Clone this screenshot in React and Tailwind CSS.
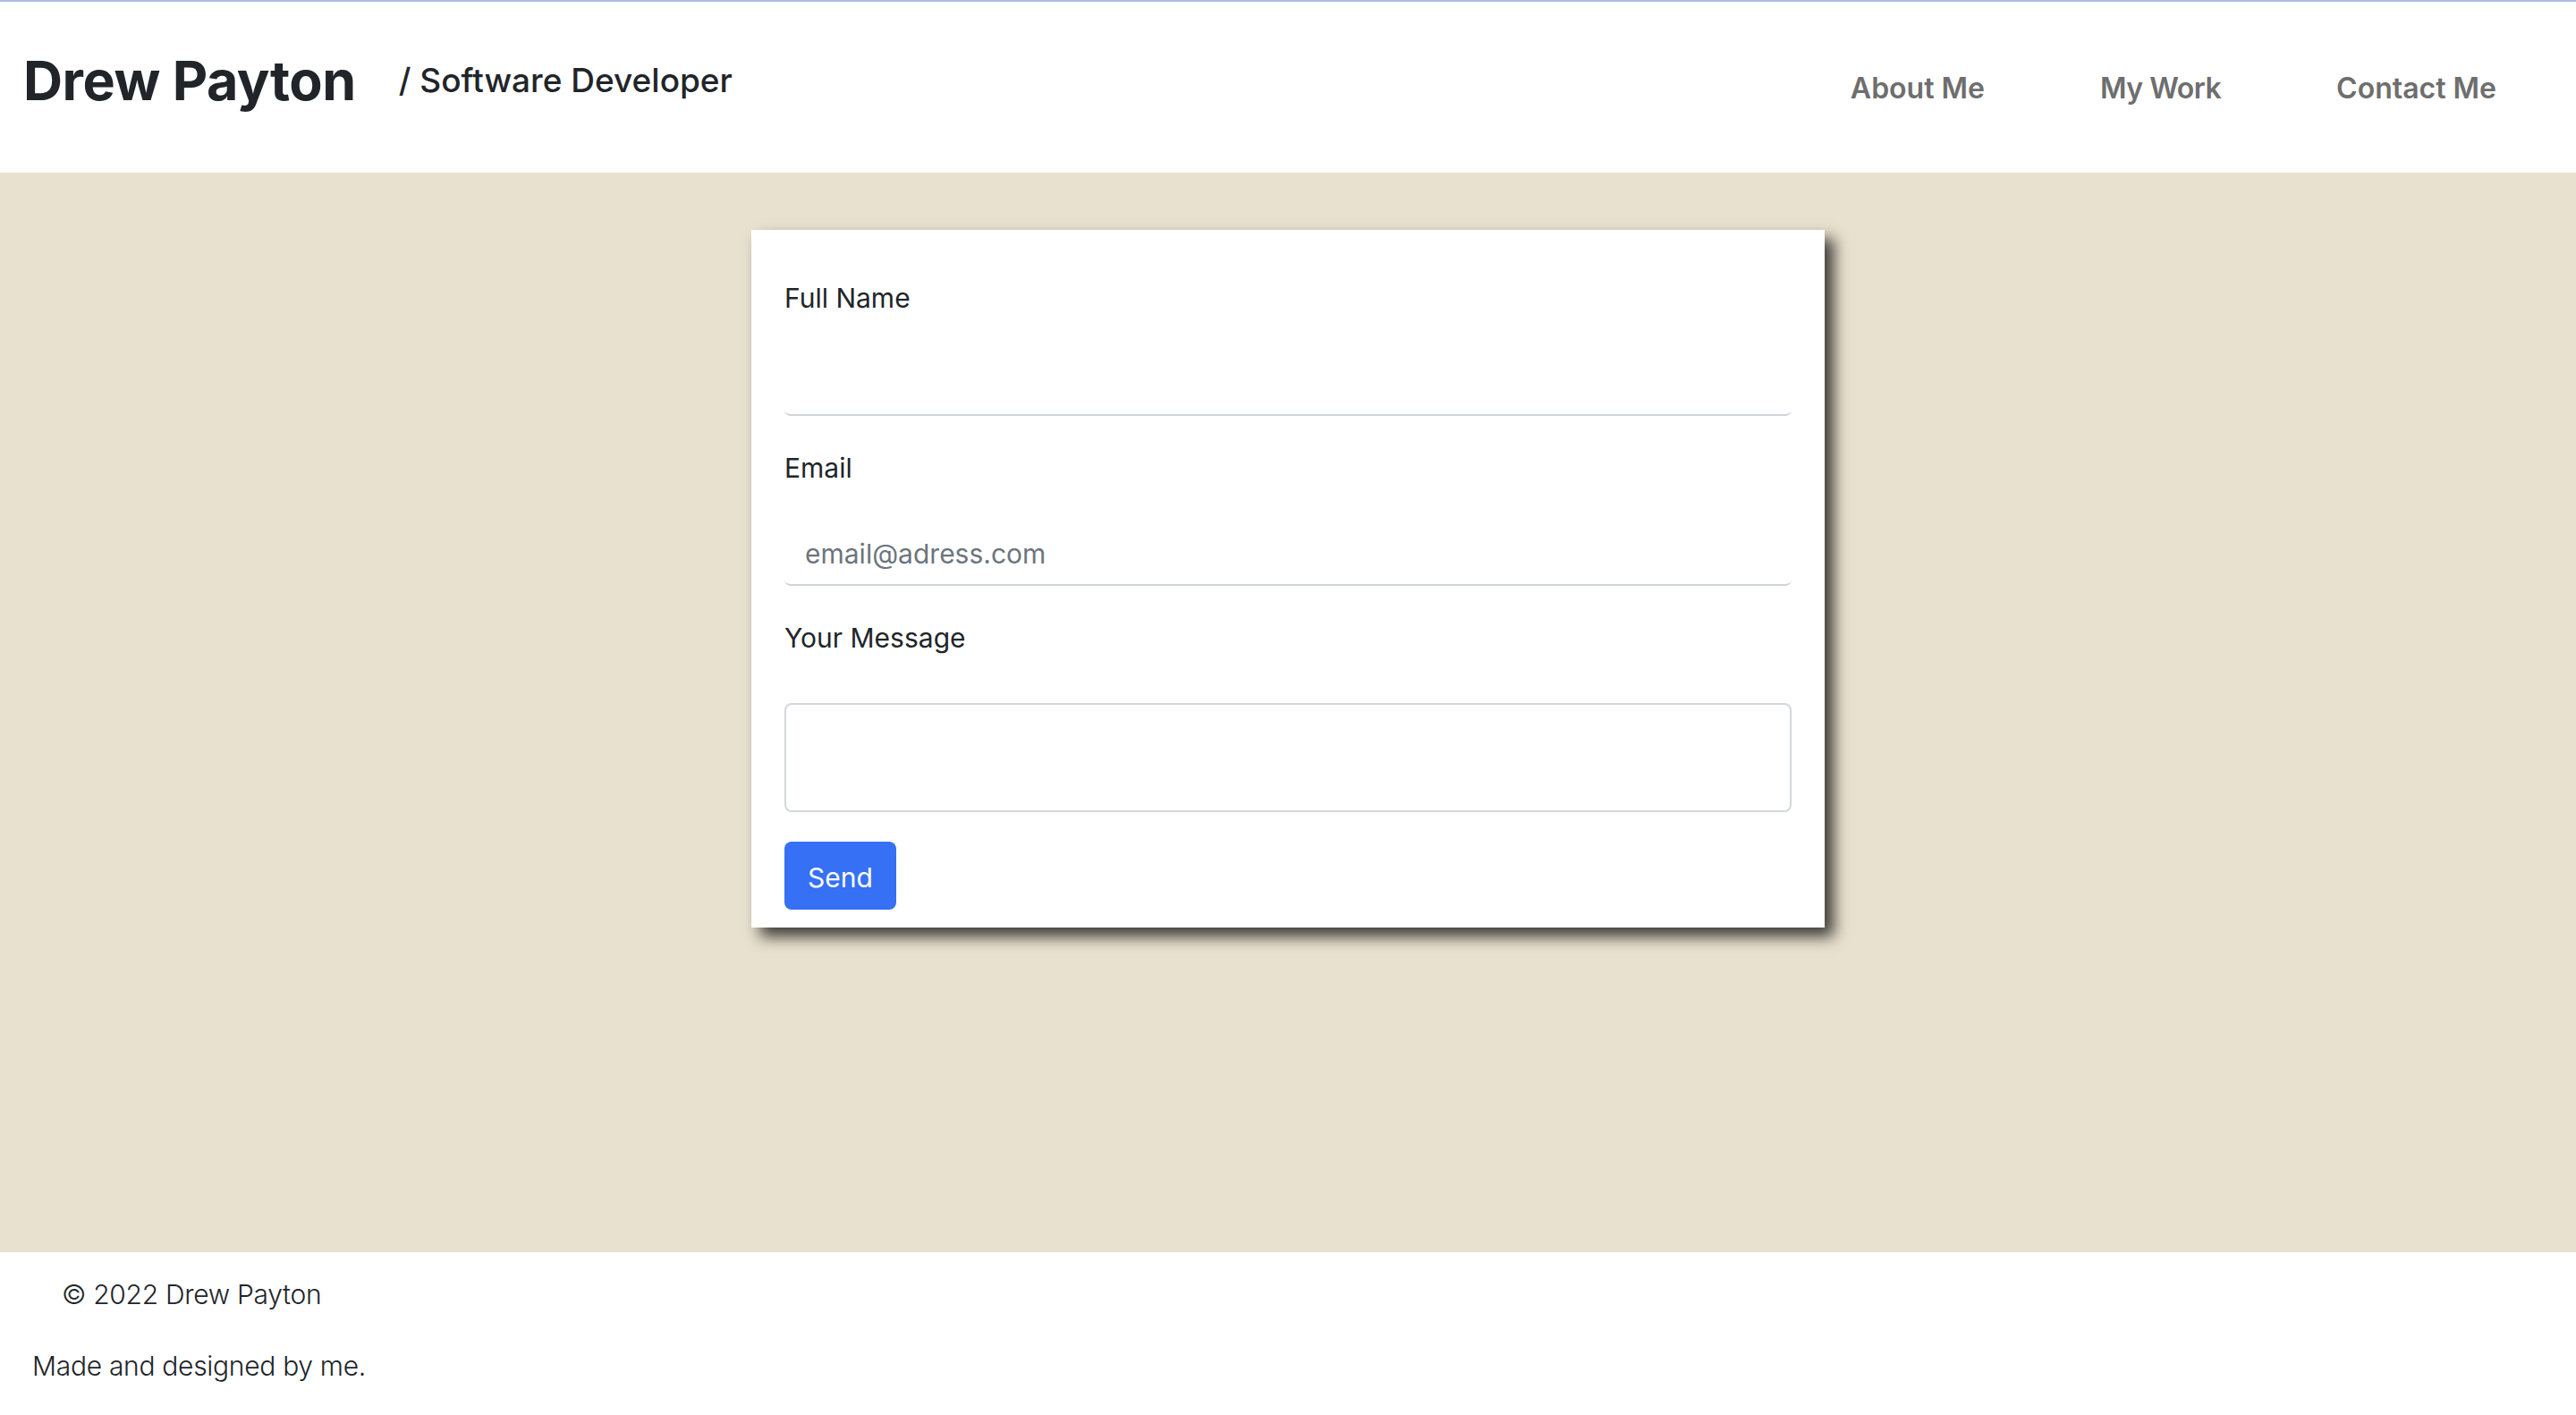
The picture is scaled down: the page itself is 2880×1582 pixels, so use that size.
import React from "react";

const Field = ({ label, children, gap = "mt-[38px]" }) => (
  <div>
    <label className="block text-[30px] leading-[45px] text-[#212529]">{label}</label>
    <div className={gap}>{children}</div>
  </div>
);

export default function App() {
  return (
    <div className="flex min-h-screen flex-col bg-white font-['Inter',sans-serif]">
      {/* Header */}
      <header className="flex h-[193px] shrink-0 items-start justify-between border-t-2 border-[#adbbe6] bg-white pl-[26px] pr-[89px] pt-[58px]">
        <div className="flex items-start">
          <h1 className="text-[61px] font-bold leading-none tracking-[-0.5px] text-[#212529]">Drew Payton</h1>
          <span className="ml-[48px] mt-[11px] text-[37px] font-medium leading-none text-[#212529]">
            / Software Developer
          </span>
        </div>
        <nav className="mt-[23px] flex gap-[129px] text-[32px] font-semibold leading-none text-[#6e6e6e]">
          <a href="#">About Me</a>
          <a href="#" className="tracking-[-0.5px]">My Work</a>
          <a href="#">Contact Me</a>
        </nav>
      </header>

      {/* Contact form */}
      <main className="flex-1 bg-[#e9e1cf] pt-[64px]">
        <form className="mx-auto flex w-[1200px] flex-col gap-[36px] bg-white px-[37px] pb-[20px] pt-[54px] shadow-[10px_10px_16px_rgba(0,0,0,0.75)]">
          <Field label="Full Name">
            <input
              type="text"
              className="block h-[71px] w-full rounded-[7px] border-b-2 border-[#ced4da] px-[23px] text-[30px] outline-none"
            />
          </Field>
          <Field label="Email">
            <input
              type="email"
              placeholder="email@adress.com"
              className="block h-[71px] w-full rounded-[7px] border-b-2 border-[#ced4da] px-[23px] text-[30px] leading-[45px] text-[#212529] outline-none placeholder:text-[#6c757d]"
            />
          </Field>
          <div>
            <Field label="Your Message" gap="mt-[50px]">
              <textarea className="block h-[122px] w-full resize-none rounded-[8px] border-2 border-[#d3d7dc] px-[23px] py-[12px] text-[30px] outline-none" />
            </Field>
            <button
              type="button"
              className="mt-[33px] h-[76px] rounded-[8px] bg-[#3570f5] px-[26px] pt-[4px] text-[30px] leading-[45px] text-white"
            >
              Send
            </button>
          </div>
        </form>
      </main>

      {/* Footer */}
      <footer className="h-[182px] shrink-0 bg-white pl-[36px] pt-[25px] text-[30px] font-light leading-[45px] tracking-[-0.3px] text-[#212529]">
        <p className="ml-[33px]">© 2022 Drew Payton</p>
        <p className="mt-[35px]">Made and designed by me.</p>
      </footer>
    </div>
  );
}
